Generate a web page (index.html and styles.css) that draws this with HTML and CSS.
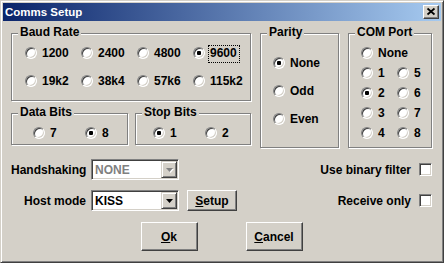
FILE: index.html
```html
<!DOCTYPE html>
<html lang="en">
<head>
  <meta charset="UTF-8" />
  <title>Comms Setup</title>
  <link rel="stylesheet" href="styles.css">
</head>
<body>
  <div class="window">
    <div class="titlebar">
      <span class="title">Comms Setup</span>
      <button class="close" title="Close">
        <svg width="14" height="12" viewBox="0 0 14 12"><path d="M3.5 2.5l7 6M10.5 2.5l-7 6" stroke="#000" stroke-width="1.7"/></svg>
      </button>
    </div>

    <div class="content">
      <div class="top">
        <div class="left-col">
          <div class="group baud">
            <span class="group-title">Baud Rate</span>
            <div class="baud-grid">
              <label class="radio"><span class="dot"></span>1200</label>
              <label class="radio"><span class="dot"></span>2400</label>
              <label class="radio"><span class="dot"></span>4800</label>
              <label class="radio on"><span class="dot"></span><span class="focus">9600</span></label>
              <label class="radio"><span class="dot"></span>19k2</label>
              <label class="radio"><span class="dot"></span>38k4</label>
              <label class="radio"><span class="dot"></span>57k6</label>
              <label class="radio"><span class="dot"></span>115k2</label>
            </div>
          </div>
          <div class="bits">
            <div class="group data-bits">
              <span class="group-title">Data Bits</span>
              <label class="radio"><span class="dot"></span>7</label>
              <label class="radio on"><span class="dot"></span>8</label>
            </div>
            <div class="group stop-bits">
              <span class="group-title">Stop Bits</span>
              <label class="radio on"><span class="dot"></span>1</label>
              <label class="radio"><span class="dot"></span>2</label>
            </div>
          </div>
        </div>

        <div class="group parity">
          <span class="group-title">Parity</span>
          <label class="radio on"><span class="dot"></span>None</label>
          <label class="radio"><span class="dot"></span>Odd</label>
          <label class="radio"><span class="dot"></span>Even</label>
        </div>

        <div class="group com">
          <span class="group-title">COM Port</span>
          <label class="radio wide"><span class="dot"></span>None</label>
          <label class="radio"><span class="dot"></span>1</label>
          <label class="radio"><span class="dot"></span>5</label>
          <label class="radio on"><span class="dot"></span>2</label>
          <label class="radio"><span class="dot"></span>6</label>
          <label class="radio"><span class="dot"></span>3</label>
          <label class="radio"><span class="dot"></span>7</label>
          <label class="radio"><span class="dot"></span>4</label>
          <label class="radio"><span class="dot"></span>8</label>
        </div>
      </div>

      <div class="options">
        <div class="opt-row">
          <span class="opt-label">Handshaking</span>
          <div class="combo disabled">
            <span class="combo-text">NONE</span>
            <span class="combo-btn"><svg width="7" height="4" viewBox="0 0 7 4"><path d="M0 0h7L3.5 4z"/></svg></span>
          </div>
          <label class="check">Use binary filter <span class="box"></span></label>
        </div>
        <div class="opt-row">
          <span class="opt-label">Host mode</span>
          <div class="combo">
            <span class="combo-text">KISS</span>
            <span class="combo-btn"><svg width="7" height="4" viewBox="0 0 7 4"><path d="M0 0h7L3.5 4z"/></svg></span>
          </div>
          <button class="btn setup"><u>S</u>etup</button>
          <label class="check">Receive only <span class="box"></span></label>
        </div>
      </div>

      <div class="actions">
        <button class="btn big"><u>O</u>k</button>
        <button class="btn big"><u>C</u>ancel</button>
      </div>
    </div>
  </div>
</body>
</html>
```

FILE: styles.css
```css
* {
  box-sizing: border-box;
}
body {
  margin: 0;
  background: #d4d0c8;
  font-family: "Liberation Sans", Arial, sans-serif;
  font-size: 12px;
  font-weight: bold;
  color: #000;
}
button {
  font: inherit;
  color: inherit;
  cursor: pointer;
}
.window {
  width: 444px;
  height: 263px;
  padding: 2px;
  display: flex;
  flex-direction: column;
  background: #d4d0c8;
  border: 1px solid;
  border-color: #d4d0c8 #404040 #404040 #d4d0c8;
  box-shadow: inset 1px 1px #fff, inset -1px -1px #808080;
}

/* title bar */
.titlebar {
  height: 18px;
  display: flex;
  align-items: center;
  justify-content: space-between;
  padding: 0 2px;
  background: linear-gradient(to right, #0a246a, #a6caf0);
  color: #fff;
  font-size: 11.5px;
}
.close {
  width: 16px;
  height: 14px;
  padding: 0;
  display: flex;
  align-items: center;
  justify-content: center;
  background: #d4d0c8;
  border: 1px solid;
  border-color: #fff #404040 #404040 #fff;
  box-shadow: inset -1px -1px #808080, inset 1px 1px #d4d0c8;
}

.content {
  flex: 1;
  padding: 12px 9px 0 8px;
}
.top {
  display: flex;
  align-items: flex-start;
  gap: 9px;
}
.left-col {
  width: 240px;
  display: flex;
  flex-direction: column;
  gap: 12px;
}

/* group boxes */
.group {
  position: relative;
  border: 1px solid #808080;
  box-shadow: 1px 1px 0 #fff, inset 1px 1px 0 #fff;
}
.group-title {
  position: absolute;
  top: -8px;
  left: 6px;
  padding: 0 2px;
  line-height: 12px;
  background: #d4d0c8;
}
.baud {
  height: 68px;
  padding: 13px 0 0 13px;
}
.baud-grid {
  display: grid;
  grid-template-columns: repeat(4, 56px);
  row-gap: 16px;
}
.bits {
  display: flex;
  gap: 7px;
}
.data-bits, .stop-bits {
  height: 32px;
  padding-top: 13px;
  display: grid;
  grid-template-columns: 52px 52px;
}
.data-bits {
  width: 117px;
  padding-left: 21px;
}
.stop-bits {
  width: 116px;
  padding-left: 17px;
}
.parity {
  width: 79px;
  height: 115px;
  padding: 23px 0 0 12px;
  display: flex;
  flex-direction: column;
  gap: 16px;
}
.com {
  width: 84px;
  height: 115px;
  padding: 13px 0 0 12px;
  display: grid;
  grid-template-columns: 36px 36px;
  align-content: start;
  row-gap: 8px;
}
.com .wide {
  grid-column: span 2;
}

/* radio buttons */
.radio {
  display: flex;
  align-items: center;
  gap: 5px;
  height: 12px;
  line-height: 12px;
  white-space: nowrap;
}
.dot {
  position: relative;
  flex: none;
  width: 12px;
  height: 12px;
  border-radius: 50%;
  background: #fff;
  border: 1px solid;
  border-color: #808080 #fff #fff #808080;
  box-shadow: inset 1px 1px #404040, inset -1px -1px #d4d0c8;
}
.radio.on .dot::after {
  content: "";
  position: absolute;
  left: 3px;
  top: 3px;
  width: 4px;
  height: 4px;
  border-radius: 1px;
  background: #000;
}
.focus {
  position: relative;
}
.focus::before {
  content: "";
  position: absolute;
  top: -2px;
  bottom: -4px;
  left: -2px;
  right: -3px;
  border: 1px dotted #000;
}

/* option rows */
.options {
  margin-top: 11px;
  display: flex;
  flex-direction: column;
  gap: 10px;
}
.opt-row {
  height: 21px;
  display: flex;
  align-items: center;
}
.opt-label {
  width: 75px;
  margin-right: 5px;
  text-align: right;
}
.combo {
  width: 88px;
  height: 21px;
  display: flex;
  align-items: center;
  background: #fff;
  border: 1px solid;
  border-color: #808080 #fff #fff #808080;
  box-shadow: inset 1px 1px #404040, inset -1px -1px #d4d0c8;
  padding: 1px;
}
.combo-text {
  flex: 1;
  padding-left: 2px;
}
.combo.disabled .combo-text {
  color: #808080;
}
.combo-btn {
  width: 16px;
  height: 17px;
  display: flex;
  align-items: center;
  justify-content: center;
  background: #d4d0c8;
  border: 1px solid;
  border-color: #d4d0c8 #404040 #404040 #d4d0c8;
  box-shadow: inset 1px 1px #fff, inset -1px -1px #808080;
}
.combo.disabled .combo-btn svg {
  fill: #808080;
  filter: drop-shadow(1px 1px 0 #fff);
}
.check {
  margin-left: auto;
  display: flex;
  align-items: center;
  gap: 8px;
}
.box {
  width: 13px;
  height: 13px;
  background: #fff;
  border: 1px solid;
  border-color: #808080 #fff #fff #808080;
  box-shadow: inset 1px 1px #404040, inset -1px -1px #d4d0c8;
}

/* push buttons */
.btn {
  padding: 0;
  background: #d4d0c8;
  border: 1px solid;
  border-color: #fff #404040 #404040 #fff;
  box-shadow: inset -1px -1px #808080, inset 1px 1px #d4d0c8;
}
.setup {
  width: 50px;
  height: 21px;
  margin-left: 8px;
}
.actions {
  margin-top: 11px;
  display: flex;
  justify-content: center;
  gap: 48px;
}
.big {
  width: 57px;
  height: 29px;
}
```
